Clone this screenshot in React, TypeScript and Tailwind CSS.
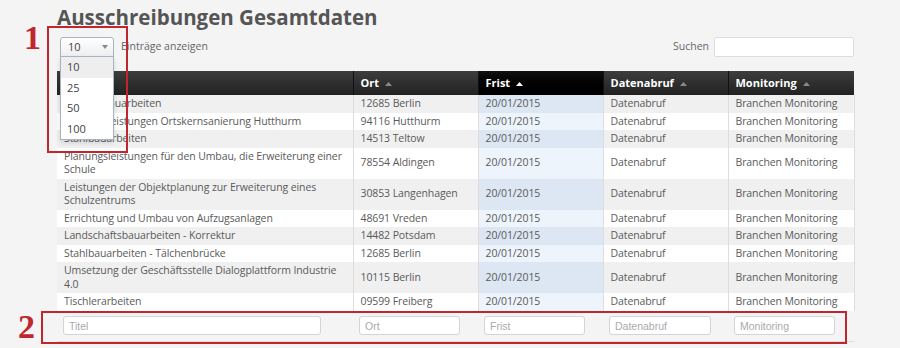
import React from "react";

type Row = { titel: string; ort: string };

const rows: Row[] = [
  { titel: "Trockenbauarbeiten", ort: "12685 Berlin" },
  { titel: "Planungsleistungen Ortskernsanierung Hutthurm", ort: "94116 Hutthurm" },
  { titel: "Stahlbauarbeiten", ort: "14513 Teltow" },
  { titel: "Planungsleistungen für den Umbau, die Erweiterung einer Schule", ort: "78554 Aldingen" },
  { titel: "Leistungen der Objektplanung zur Erweiterung eines Schulzentrums", ort: "30853 Langenhagen" },
  { titel: "Errichtung und Umbau von Aufzugsanlagen", ort: "48691 Vreden" },
  { titel: "Landschaftsbauarbeiten - Korrektur", ort: "14482 Potsdam" },
  { titel: "Stahlbauarbeiten - Tälchenbrücke", ort: "12685 Berlin" },
  { titel: "Umsetzung der Geschäftsstelle Dialogplattform Industrie 4.0", ort: "10115 Berlin" },
  { titel: "Tischlerarbeiten", ort: "09599 Freiberg" },
];

const SortArrow = ({ active }: { active?: boolean }) => (
  <svg width="7" height="4" viewBox="0 0 7 4" className="ml-[6px] inline-block align-middle">
    <path d="M0 4 L3.5 0 L7 4 Z" fill={active ? "#ffffff" : "#8a8a8a"} />
  </svg>
);

const headers = [
  { label: "Titel", w: "w-[296px]" },
  { label: "Ort", w: "w-[125px]" },
  { label: "Frist", w: "w-[125px]", active: true },
  { label: "Datenabruf", w: "w-[125px]" },
  { label: "Monitoring", w: "w-[126px]" },
];

const filters = [
  { ph: "Titel", w: "w-[258px]" },
  { ph: "Ort", w: "w-[101px]" },
  { ph: "Frist", w: "w-[101px]" },
  { ph: "Datenabruf", w: "w-[102px]" },
  { ph: "Monitoring", w: "w-[101px]" },
];

export default function App() {
  return (
    <div className="relative min-h-screen bg-[#f4f4f4] font-['Open_Sans',sans-serif] text-[#555]">
      <div className="pl-[57px] w-[854px]">
        <h1 className="pt-[3px] text-[20.5px] leading-[28px] font-bold text-[#555]">
          Ausschreibungen Gesamtdaten
        </h1>

        <div className="mt-[6px] flex h-[20px] items-center justify-between">
          <div className="flex items-center">
            <div className="relative ml-[3px]">
              <div className="flex h-[20px] w-[54px] items-center justify-between rounded-t-[3px] border border-[#a8b3c2] bg-gradient-to-b from-white to-[#eeeeee] pl-[7px] pr-[5px] text-[11px] text-[#444]">
                <span>10</span>
                <svg width="6" height="4" viewBox="0 0 6 4">
                  <path d="M0 0 L6 0 L3 4 Z" fill="#888" />
                </svg>
              </div>
              <ul className="absolute left-0 top-[19px] z-10 w-[54px] border border-[#a8b3c2] bg-white text-[11px] text-[#444] shadow-[0_3px_5px_rgba(0,0,0,0.12)]">
                {["10", "25", "50", "100"].map((v, i) => (
                  <li
                    key={v}
                    className={`flex h-[20.5px] items-center pl-[6px] ${i === 0 ? "bg-[#eeeeee]" : ""}`}
                  >
                    {v}
                  </li>
                ))}
              </ul>
            </div>
            <span className="ml-[7px] text-[10.5px] text-[#666]">Einträge anzeigen</span>
          </div>
          <div className="flex items-center">
            <span className="mr-[5px] text-[10.5px] text-[#666]">Suchen</span>
            <input className="h-[20px] w-[140px] rounded-[2px] border border-[#dddddd] bg-white outline-none" />
          </div>
        </div>

        <table className="mt-[14px] w-[797px] table-fixed border-collapse text-[11px]">
          <colgroup>
            {headers.map((h) => (
              <col key={h.label} className={h.w} />
            ))}
          </colgroup>
          <thead>
            <tr className="h-[24px]">
              {headers.map((h, i) => (
                <th
                  key={h.label}
                  className={`px-[7px] text-left font-bold text-white ${
                    h.active
                      ? "bg-gradient-to-b from-[#111] to-[#000]"
                      : "bg-gradient-to-b from-[#3d3d3d] to-[#222]"
                  } ${i > 0 ? "border-l border-[#111]" : ""}`}
                >
                  {h.label}
                  <SortArrow active={h.active} />
                </th>
              ))}
            </tr>
          </thead>
          <tbody className="text-[10.5px] leading-[13.5px] tracking-[-0.1px] text-[#5a5a5a]">
            {rows.map((r, i) => {
              const odd = i % 2 === 0;
              const base = odd ? "bg-[#f0f0f0]" : "bg-white";
              const frist = odd ? "bg-[#dce7f3]" : "bg-[#eef4fb]";
              const cell = "pl-[7px] pr-[4px] py-[2px] align-middle";
              return (
                <tr key={i} className={base}>
                  <td className={cell}>{r.titel}</td>
                  <td className={`${cell} border-l border-[#dddddd]`}>{r.ort}</td>
                  <td className={`${cell} border-l border-[#dddddd] ${frist}`}>20/01/2015</td>
                  <td className={`${cell} border-l border-[#dddddd]`}>Datenabruf</td>
                  <td className={`${cell} border-l border-r border-[#dddddd]`}>Branchen Monitoring</td>
                </tr>
              );
            })}
          </tbody>
          <tfoot>
            <tr className="h-[31px] border-b border-[#dddddd]">
              {filters.map((f) => (
                <td key={f.ph} className="pl-[6px] align-middle">
                  <input
                    placeholder={f.ph}
                    className={`${f.w} h-[19px] rounded-[3px] border border-[#d4d4d4] bg-white px-[5px] font-['Liberation_Sans',sans-serif] text-[10.5px] text-[#555] outline-none placeholder:text-[#aaa]`}
                  />
                </td>
              ))}
            </tr>
          </tfoot>
        </table>
      </div>

      {/* annotations */}
      <div className="pointer-events-none absolute left-[47px] top-[26px] h-[127px] w-[81px] border-2 border-[#c0262d]" />
      <span className="pointer-events-none absolute left-[24px] top-[18px] font-['Liberation_Serif',serif] text-[34px] font-bold leading-[40px] text-[#c0262d]">
        1
      </span>
      <div className="pointer-events-none absolute left-[41px] top-[311px] h-[33px] w-[806px] border-2 border-[#c0262d]" />
      <span className="pointer-events-none absolute left-[18px] top-[307px] font-['Liberation_Serif',serif] text-[34px] font-bold leading-[40px] text-[#c0262d]">
        2
      </span>
    </div>
  );
}
